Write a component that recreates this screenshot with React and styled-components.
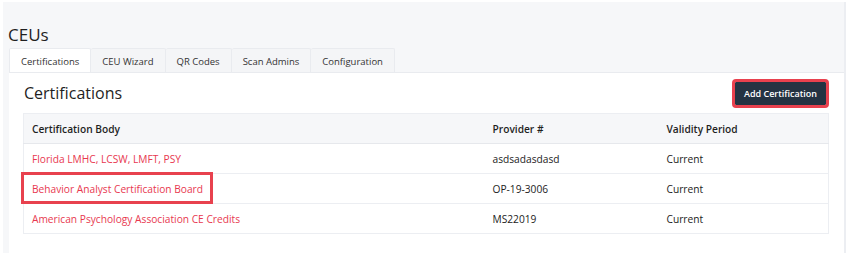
import React from "react";
import styled, { createGlobalStyle } from "styled-components";

const GlobalStyle = createGlobalStyle`
  html, body {
    margin: 0;
    padding: 0;
    background: #ffffff;
  }
  body {
    font-family: "Open Sans", "Liberation Sans", sans-serif;
    color: #222;
  }
`;

const tabs = ["Certifications", "CEU Wizard", "QR Codes", "Scan Admins", "Configuration"];

const rows = [
  { body: "Florida LMHC, LCSW, LMFT, PSY", provider: "asdsadasdasd", period: "Current" },
  { body: "Behavior Analyst Certification Board", provider: "OP-19-3006", period: "Current", marked: true },
  { body: "American Psychology Association CE Credits", provider: "MS22019", period: "Current" },
];

const App = () => {
  return (
    <>
      <GlobalStyle />
      <Page>
        <Title>CEUs</Title>
        <TabBar>
          {tabs.map((t, i) => (
            <Tab key={t} active={i === 0}>
              {t}
            </Tab>
          ))}
        </TabBar>
        <Panel>
          <PanelHeader>
            <h2>Certifications</h2>
            <AddButton>Add Certification</AddButton>
          </PanelHeader>
          <Table>
            <colgroup>
              <col style={{ width: "461px" }} />
              <col style={{ width: "174px" }} />
              <col />
            </colgroup>
            <thead>
              <tr>
                <Th>Certification Body</Th>
                <Th>Provider #</Th>
                <Th>Validity Period</Th>
              </tr>
            </thead>
            <tbody>
              {rows.map((r) => (
                <tr key={r.body}>
                  <Td>
                    <BodyLink href="#" marked={r.marked}>
                      {r.body}
                    </BodyLink>
                  </Td>
                  <Td>{r.provider}</Td>
                  <Td>{r.period}</Td>
                </tr>
              ))}
            </tbody>
          </Table>
        </Panel>
      </Page>
    </>
  );
};

const Page = styled.div`
  margin: 2px 3px 0 3px;
  height: 251px;
  background-color: #f6f7f9;
  border-right: 2px solid #eceef2;
  padding-left: 6px;
  display: flex;
  flex-direction: column;
  overflow: hidden;
`;

const Title = styled.h1`
  margin: 22px 0 0 -1px;
  font-size: 17px;
  font-weight: 400;
  line-height: 22px;
  color: #1f1f1f;
`;

const TabBar = styled.div`
  display: flex;
  margin-top: 2px;
  height: 25px;
`;

const Tab = styled.div`
  display: flex;
  align-items: center;
  padding: 0 11px;
  font-size: 9.5px;
  color: #333;
  background-color: ${(p) => (p.active ? "#ffffff" : "#f4f5f7")};
  border: 1px solid #e9ebef;
  border-bottom: none;
  border-left: ${(p) => (p.active ? "1px solid #e9ebef" : "none")};
  border-radius: 2px 2px 0 0;
  cursor: pointer;
`;

const Panel = styled.div`
  flex: 1;
  background-color: #ffffff;
  border-top: 1px solid #e9ebef;
  margin-top: -1px;
  padding: 0 15px 0 14px;
`;

const PanelHeader = styled.div`
  display: flex;
  justify-content: space-between;
  align-items: center;
  height: 40px;
  h2 {
    margin: 0 0 0 1px;
    font-size: 16px;
    font-weight: 400;
    color: #1f1f1f;
  }
`;

const AddButton = styled.button`
  height: 23px;
  width: 91px;
  background-color: #243342;
  color: #ffffff;
  border: none;
  border-radius: 1px;
  font-family: inherit;
  font-size: 9px;
  font-weight: 600;
  padding: 0;
  outline: 3px solid #e8414e;
  outline-offset: 0;
  margin-right: 3px;
  cursor: pointer;
`;

const Table = styled.table`
  width: 100%;
  table-layout: fixed;
  border-collapse: collapse;
  border: 1px solid #eceef2;
  font-size: 10.2px;
`;

const Th = styled.th`
  height: 29px;
  padding: 0 8px;
  text-align: left;
  font-weight: 600;
  color: #1f1f1f;
  background-color: #f6f7f9;
  border-bottom: 1px solid #e6e8ec;
`;

const Td = styled.td`
  height: 29px;
  padding: 0 8px;
  color: #222;
  border-bottom: 1px solid #eceef2;
`;

const BodyLink = styled.a`
  color: #e8384f;
  text-decoration: none;
  ${(p) =>
    p.marked &&
    `
    display: inline-block;
    padding: 10px 10px 8px 11px;
    margin: -10px -10px -8px -11px;
    outline: 3px solid #e8414e;
    outline-offset: -3px;
  `}
`;

export default App;
